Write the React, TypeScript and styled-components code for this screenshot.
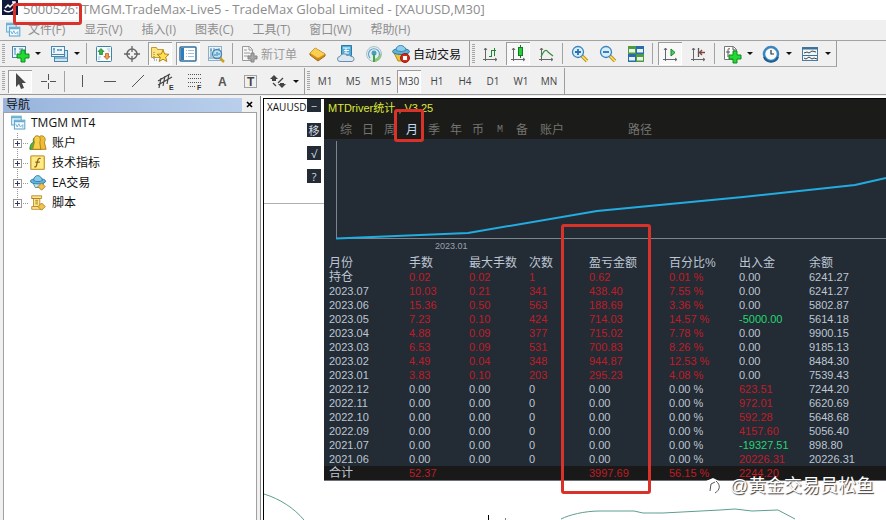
import React from 'react';
import styled, { createGlobalStyle, css } from 'styled-components';

const uiFont = '"Open Sans", "Noto Sans CJK SC", sans-serif';
const dataFont = '"Liberation Sans", "Noto Sans CJK SC", sans-serif';

const GlobalStyle = createGlobalStyle`
  *, *::before, *::after { box-sizing: border-box; }
  body { margin: 0; background: #fff; font-family: ${uiFont}; font-size: 12px; color: #111; }
  button { font: inherit; color: inherit; background: none; border: 0; padding: 0; margin: 0; }
  svg { display: block; flex: none; }
`;

const Page = styled.div`
  position: relative;
  display: flex;
  flex-direction: column;
  height: 100vh;
  min-height: 500px;
  overflow: hidden;
  background: #f0f0f0;
`;

const TitleBar = styled.header`
  display: flex;
  align-items: center;
  gap: 5px;
  height: 20px;
  flex: none;
  background: #fff;
  color: #8c8c8c;
  font-size: 13px;
  line-height: 16px;
  white-space: nowrap;
`;

const AppLogo = styled.svg`
  align-self: flex-start;
  margin-left: 2px;
`;

const AppTitle = styled.h1`
  margin: 0;
  padding-bottom: 2px;
  font: inherit;
  line-height: 16px;
`;

const MenuBar = styled.nav`
  display: flex;
  align-items: center;
  gap: 19px;
  height: 20px;
  flex: none;
  padding-left: 5px;
  color: #8e8e8e;
  line-height: 18px;
`;

const MenuIcon = styled.span`
  margin-right: -12px;
`;

const MenuItem = styled.button`
  white-space: nowrap;
`;

const ToolbarRow = styled.div<{ $last?: boolean }>`
  display: flex;
  flex: none;
  height: 27px;
  border-top: 1px solid ${p => (p.$last ? 'transparent' : '#a3a3a3')};
`;

const ToolGroup = styled.div<{ $lined?: boolean }>`
  display: flex;
  align-items: center;
  gap: 4px;
  padding: 0 3px 0 2px;
  border-right: 1px solid #9d9d9d;
  border-bottom: ${p => (p.$lined ? '1px solid #a8a8a8' : '0')};
`;

const Grip = styled.span`
  width: 3px;
  height: 20px;
  margin-right: -1px;
  background: repeating-linear-gradient(#a5a5a5 0 1px, #f0f0f0 1px 2px);
`;

const Separator = styled.span`
  width: 1px;
  height: 21px;
  margin-right: 1px;
  background: #a2a2a2;
`;

const ToolButton = styled.button<{ $pressed?: boolean }>`
  display: flex;
  align-items: center;
  justify-content: center;
  width: 24px;
  height: 23px;
  font-size: 10px;
  color: #444;
  white-space: nowrap;
  ${p =>
    p.$pressed &&
    css`
      background: #f8f8f8;
      box-shadow: inset 1px 1px 0 #9c9c9c, inset -1px -1px 0 #fff;
    `}
`;

const LabelButton = styled.button<{ $muted?: boolean }>`
  display: flex;
  align-items: center;
  gap: 2px;
  width: ${p => (p.$muted ? '64px' : '76px')};
  height: 23px;
  padding-left: 1px;
  color: ${p => (p.$muted ? '#999' : '#111')};
  white-space: nowrap;
`;

const DropArrow = styled.button`
  width: 11px;
  height: 23px;
  margin-left: -4px;
  display: flex;
  align-items: center;
  justify-content: center;
  &::after {
    content: '';
    border: 3px solid transparent;
    border-top-color: #111;
    border-bottom: 0;
  }
`;

const Workspace = styled.main`
  display: grid;
  grid-template-columns: 260px minmax(0, 1fr);
  flex: 1;
  min-height: 0;
  border-top: 1px solid #999;
`;

const Navigator = styled.aside`
  display: flex;
  flex-direction: column;
  padding: 2px 3px 0 3px;
`;

const NavHeading = styled.div`
  display: flex;
  align-items: center;
  height: 15px;
  flex: none;
`;

const NavTitle = styled.h2`
  flex: 1;
  margin: 0;
  padding-left: 3px;
  font: inherit;
  line-height: 14px;
  background: linear-gradient(90deg, #98b4dc, #b9cfec);
`;

const CloseButton = styled.button`
  width: 15px;
  height: 14px;
  display: flex;
  align-items: center;
  justify-content: center;
`;

const Tree = styled.ul`
  flex: 1;
  list-style: none;
  margin: 0;
  padding: 0 0 0 6px;
  background: #fff;
  border: 1px solid #a0a0a0;
  border-bottom: 0;
`;

const TreeRow = styled.li`
  display: flex;
  align-items: center;
  gap: 5px;
  height: 20px;
  line-height: 20px;
  white-space: nowrap;
`;

const ChartWindow = styled.section`
  position: relative;
  display: flex;
  align-items: flex-start;
  margin-top: 1px;
  border-left: 1px solid #858585;
  background: #fff;
  overflow: hidden;
`;

const ChartFrame = styled.div`
  display: flex;
  align-items: flex-start;
  flex: 1;
  height: 100%;
  margin-left: 2px;
  margin-top: 2px;
  border-left: 1px solid #000;
  border-top: 1px solid #000;
  min-width: 0;
`;

const SideRail = styled.div`
  display: flex;
  flex: none;
  justify-content: space-between;
  width: 60px;
  height: 105px;
  padding: 0 3px 0 3px;
  border-bottom: 1px solid #b0b0b0;
`;

const SymbolLabel = styled.span`
  width: 40px;
  overflow: hidden;
  font-size: 10px;
  line-height: 16px;
`;

const RailButtons = styled.div`
  display: flex;
  flex-direction: column;
  gap: 9px;
`;

const RailButton = styled.button`
  width: 14px;
  height: 14px;
  background: #232b35;
  color: #d5dde4;
  font-size: 11px;
  line-height: 13px;
  text-align: center;
  overflow: hidden;
  &:first-child { height: 13px; line-height: 10px; margin-bottom: 2px; }
`;

const Panel = styled.article`
  flex: 1;
  min-width: 0;
  background: #232b35;
  border-bottom: 1px solid #6b7177;
  font-family: ${dataFont};
  font-size: 11px;
`;

const PanelHeader = styled.div`
  height: 40px;
  background: #1b1b1a;
`;

const PanelTitle = styled.h2`
  margin: 0;
  padding-left: 4px;
  font-size: 11px;
  font-weight: 400;
  line-height: 19px;
  color: #dfe83c;
  white-space: pre;
`;

const Tabs = styled.div`
  display: flex;
  padding-left: 11px;
`;

const Tab = styled.button<{ $active?: boolean; $wide?: boolean; $apart?: boolean }>`
  width: ${p => (p.$wide ? '38px' : '22px')};
  margin-left: ${p => (p.$apart ? '50px' : '0')};
  font-size: 12px;
  line-height: 24px;
  text-align: center;
  color: ${p => (p.$active ? '#c5dcf4' : '#74746f')};
`;

const MonoTab = styled(Tab)`
  font-family: "Liberation Mono", monospace;
  font-size: 10px;
`;

const PlotArea = styled.div`
  height: 117px;
`;

const Plot = styled.svg`
  width: 100%;
  height: 101px;
`;

const PlotLabel = styled.div`
  padding-left: 111px;
  font-size: 9px;
  line-height: 12px;
  color: #9aa1a8;
`;

const Stats = styled.table`
  width: 100%;
  table-layout: fixed;
  border-collapse: collapse;
  color: #bdc6d2;
`;

const Column = styled.col<{ $width?: number }>`
  width: ${p => (p.$width ? `${p.$width}px` : 'auto')};
`;

const HeadCell = styled.th`
  height: 14px;
  padding: 0 0 0 5px;
  font-size: 12px;
  font-weight: 400;
  line-height: 14px;
  text-align: left;
  white-space: nowrap;
`;

const tones = { plain: '#bdc6d2', red: '#c01c25', green: '#22d872' };

const Cell = styled.td<{ $tone?: keyof typeof tones; $cjk?: boolean }>`
  height: 14px;
  padding: 0 0 0 5px;
  font-size: ${p => (p.$cjk ? '12px' : '11px')};
  line-height: 14px;
  white-space: nowrap;
  color: ${p => tones[p.$tone ?? 'plain']};
`;

const TotalRow = styled.tr`
  background: #191919;
`;

const PriceLines = styled.svg`
  position: absolute;
  left: 3px;
  top: 386px;
`;

const Highlight = styled.div<{ $x: number; $y: number; $w: number; $h: number }>`
  position: absolute;
  left: ${p => p.$x}px;
  top: ${p => p.$y}px;
  width: ${p => p.$w}px;
  height: ${p => p.$h}px;
  border: 3px solid #d8322b;
  border-radius: 3px;
  pointer-events: none;
`;

const Watermark = styled.div`
  position: absolute;
  right: 12px;
  bottom: 22px;
  display: flex;
  align-items: center;
  gap: 7px;
  color: #fff;
  font-size: 18px;
  line-height: 24px;
  font-family: ${dataFont};
  text-shadow: 1px 1px 1px #333;
`;

/* ---------- icons ---------- */

const Icon = ({ children, size = 20 }: { children: React.ReactNode; size?: number }) => (
  <svg width={size} height={size} viewBox="0 0 20 20" fill="none" aria-hidden="true">{children}</svg>
);

const GreenPlus = ({ x, y }: { x: number; y: number }) => (
  <path transform={`translate(${x} ${y})`} d="M4 0h4v4h4v4H8v4H4V8H0V4h4z" fill="#1fdb32" stroke="#128a20" />
);

const NewChartIcon = () => (
  <Icon>
    <rect x="2.5" y="2.5" width="13" height="11" fill="#eef6fc" stroke="#4787ad" />
    <path d="M5 4v7M4 5h2M9 5h4M9 8h4" stroke="#4787ad" />
    <GreenPlus x={7} y={6} />
  </Icon>
);

const WindowsIcon = () => (
  <Icon>
    <rect x="5.5" y="6.5" width="13" height="11" fill="#cfe5f4" stroke="#4787ad" />
    <path d="M6 14h12" stroke="#4787ad" />
    <rect x="2.5" y="2.5" width="13" height="10" fill="#edf6fc" stroke="#4787ad" />
    <path d="M3 10.5h12M5 4v5M4 5h2M8 6h5M9 5v2M12 5v2" stroke="#4787ad" />
  </Icon>
);

const MarketIcon = () => (
  <Icon>
    <rect x="2.5" y="2.5" width="15" height="15" rx="1" fill="#f6fbff" stroke="#3f83a9" />
    <path d="M7 4.5l3 3H8.500v3h-3v-3H4z" fill="#35b63c" stroke="#187a24" strokeWidth=".7" />
    <path d="M13 15.500l-3-3h1.500v-3h3v3H16z" fill="#f2a13b" stroke="#b34f21" strokeWidth=".7" />
    <path d="M13 5h3M14 7h2M4 13h3M4 15h2" stroke="#a8c4d8" />
  </Icon>
);

const CrosshairIcon = () => (
  <Icon>
    <circle cx="10" cy="10" r="5" stroke="#666" strokeWidth="1.500" />
    <path d="M10 2v6M10 12v6M2 10h6M12 10h6" stroke="#666" strokeWidth="1.300" />
  </Icon>
);

const StarFolderIcon = () => (
  <Icon>
    <path d="M1.500 3.500h5l1 2h6v8h-12z" fill="#fbe47e" stroke="#c29b2b" />
    <path d="M4 8v8h3" stroke="#777" strokeDasharray="1 1" />
    <path d="M13 6l1.700 4 4.300.3-3.300 2.800 1.100 4.400L13 15.200l-3.800 2.300 1.100-4.400L7 10.300l4.300-.3z" fill="#ffe051" stroke="#b5861b" />
  </Icon>
);

const NavigatorIcon = () => (
  <Icon>
    <rect x="2" y="3" width="16" height="14" rx="1" fill="#fff" stroke="#2f6f9e" strokeWidth="1.500" />
    <rect x="3" y="4" width="3" height="12" fill="#2f7cb8" />
    <path d="M8 6.500h1M10 6.500h6M8 9.500h1M10 9.500h6M8 12.500h1M10 12.500h6" stroke="#a7bfd3" />
  </Icon>
);

const TesterIcon = () => (
  <Icon>
    <rect x="2.500" y="2.500" width="13" height="14" fill="#e9f3fa" stroke="#8cb0c8" />
    <path d="M5 4v9M8 4v8M4 6h2M13 4v3M3 14h11" stroke="#5e90b1" />
    <path d="M14 14l4 4" stroke="#cf9d20" strokeWidth="2.500" />
    <circle cx="11" cy="10" r="4.500" fill="#b8dcf5" fillOpacity=".8" stroke="#4787ad" strokeWidth="1.300" />
    <path d="M9 10v2M11 8v4M13 9v2" stroke="#397aa5" />
  </Icon>
);

const OrderIcon = () => (
  <Icon>
    <path d="M3.500 2.500h7l3 3v11h-10z" fill="#f7f7f7" stroke="#999" />
    <path d="M10 3v3h3M5 6h3M5 9h6M5 12h5" stroke="#999" />
    <path d="M12 9h3v3h3v3h-3v3h-3v-3H9v-3h3z" fill="#a5a5a5" stroke="#858585" />
  </Icon>
);

const GoldIcon = () => (
  <Icon>
    <path d="M7 4l10 6v2l-7 5-8-6V9z" fill="#d58e1c" stroke="#a86a12" />
    <path d="M7 4l10 6-7 4-8-5z" fill="#f8cf52" />
    <path d="M10 14v3" stroke="#b87418" />
  </Icon>
);

const CommunityIcon = () => (
  <Icon>
    <path d="M5.500 1.500h10v10h-10z" fill="#53abd8" stroke="#287aa9" />
    <path d="M7 4h7M10 4v5M8 9h5M8 6.500h5" stroke="#fff" />
    <path d="M4 17.500a2.500 2.500 0 0 1 0-5 4 4 0 0 1 7-1 3 3 0 0 1 4 1 2.500 2.500 0 0 1 1 5z" fill="#dbe8f2" stroke="#6d8daa" />
  </Icon>
);

const SignalIcon = () => (
  <Icon>
    <circle cx="10" cy="10" r="7.500" fill="#e0eef2" stroke="#a9c1cc" />
    <path d="M6 14a5.500 5.500 0 1 1 8 0" stroke="#6aa3c2" strokeWidth="1.200" />
    <path d="M10 18c6-1 8-5 7-10-1 4-3 6-7 7z" fill="#8cc878" />
    <circle cx="10" cy="9" r="2.500" fill="#4d9ac5" />
    <path d="M10 10v8" stroke="#48a348" strokeWidth="2" />
  </Icon>
);

const AutoTradeIcon = () => (
  <Icon>
    <path d="M3 9l4 8h7l3-8z" fill="#efc43c" stroke="#b78b1c" />
    <ellipse cx="10" cy="7.500" rx="8.500" ry="3" fill="#5eb2dc" stroke="#287ba5" />
    <path d="M5 6c0-6 9-6 10 0-2 2-8 2-10 0z" fill="#8ed0eb" stroke="#3a8ab0" />
    <circle cx="14" cy="14" r="4.500" fill="#cf2b18" stroke="#9d1b0c" />
    <rect x="12" y="12" width="4" height="4" fill="#fff" />
  </Icon>
);

const Axes = () => <path d="M5.500 4v13M3 15.500h14M4 6l1.500-2L7 6M15 14l2 1.500-2 1.500" stroke="#666" />;

const BarsIcon = () => (
  <Icon><Axes /><path d="M11.500 6v7M9 12.500h2M12 6.500h4M14.500 4v8" stroke="#208431" /></Icon>
);
const CandlesIcon = () => (
  <Icon><Axes /><path d="M12.500 1v13" stroke="#117e22" /><rect x="10.500" y="3.500" width="4" height="8" fill="#29ce3c" stroke="#117e22" /></Icon>
);
const LineIcon = () => (
  <Icon><Axes /><path d="M5 13c3-7 5-8 7-5l5 4" stroke="#369044" strokeWidth="1.200" /></Icon>
);

const ZoomIcon = ({ plus }: { plus?: boolean }) => (
  <Icon>
    <path d="M12 12l5 5" stroke="#bf8f18" strokeWidth="3.500" />
    <path d="M12 12l5 5" stroke="#ffe36c" strokeWidth="1.500" />
    <circle cx="8" cy="8" r="5.500" fill="#d8effb" stroke="#3983bd" strokeWidth="1.300" />
    <path d={plus ? 'M5 8h6M8 5v6' : 'M5 8h6'} stroke="#2873b5" strokeWidth="1.800" />
  </Icon>
);

const TileIcon = () => (
  <Icon>
    {[[2, 2, '#4d9d3e'], [10, 2, '#286cad'], [2, 10, '#286cad'], [10, 10, '#4d9d3e']].map(([x, y, c]) => (
      <g key={`${x}${y}`}>
        <rect x={x} y={y} width="8" height="8" fill={String(c)} />
        <rect x={Number(x) + 1} y={Number(y) + 3} width="6" height="3.500" fill="#e7f4ed" />
      </g>
    ))}
  </Icon>
);

const ScrollIcon = () => (
  <Icon><Axes /><path d="M11 5v7l4-3.500z" fill="#4ed05c" stroke="#198229" /></Icon>
);
const ShiftIcon = () => (
  <Icon><Axes /><path d="M10.500 4v9" stroke="#555" strokeWidth="1.300" /><path d="M17 8.500h-5M14 6l-2.500 2.500L14 11" stroke="#82453c" strokeWidth="1.300" /></Icon>
);
const IndicatorsIcon = () => (
  <Icon>
    <path d="M2.500 2.500h9l3 3v10h-12z" fill="#fff" stroke="#777" />
    <path d="M8 5c-2-1-2 0-2 2v6M4 8h4M11 3v3h3" stroke="#555" />
    <GreenPlus x={7} y={7} />
  </Icon>
);
const ClockIcon = () => (
  <Icon>
    <circle cx="10" cy="10" r="7" fill="#f5fafd" stroke="#3d86bd" strokeWidth="2.500" />
    <path d="M3 13a7.500 7.500 0 0 0 14 0" stroke="#1d5a90" strokeWidth="2" />
    <path d="M10 6v4h3" stroke="#333" strokeWidth="1.200" />
  </Icon>
);
const TemplateIcon = () => (
  <Icon>
    <rect x="2.500" y="3.500" width="15" height="13" fill="#eff7fc" stroke="#487b9e" />
    <path d="M2 4.500h16" stroke="#3d7195" strokeWidth="2" />
    <path d="M3 11.500h14" stroke="#3d7195" />
    <path d="M4 9l3-1 2 1 3-2 4 1M4 14l2 1 3-2 3 2 2-1 3 1" stroke="#444" />
  </Icon>
);

const CursorIcon = () => <Icon><path d="M6 2v14l3-3 2 5 3-1-2-5h4z" fill="#484848" /></Icon>;
const CrossIcon = () => <Icon><path d="M10.500 3v6M10.500 12v6M3 10.500h6M12 10.500h6" stroke="#555" /></Icon>;
const VerticalIcon = () => <Icon><path d="M10.500 4v12" stroke="#555" /></Icon>;
const HorizontalIcon = () => <Icon><path d="M4 10.500h12" stroke="#555" /></Icon>;
const TrendIcon = () => <Icon><path d="M4 16L16 4" stroke="#555" /></Icon>;
const Letter = styled.text`
  font: 700 7px "Liberation Sans", sans-serif;
  fill: #333;
`;
const ChannelIcon = () => (
  <Icon>
    <path d="M2 10L14 3M2 14L16 6M5 7L3 17M9 5L7 15M13 3l-2 10" stroke="#444" strokeWidth="1.200" />
    <Letter x="13" y="19">E</Letter>
  </Icon>
);
const FiboIcon = () => (
  <Icon>
    <path d="M4 3.500h13M4 7.500h13M4 11.500h13M4 15.500h8" stroke="#555" strokeDasharray="1 1" />
    <Letter x="13" y="19">F</Letter>
  </Icon>
);
const TextIcon = () => <Icon><text x="6" y="15" fontFamily="Liberation Sans" fontWeight="700" fontSize="12" fill="#555">A</text></Icon>;
const LabelIcon = () => (
  <Icon>
    <rect x="4.500" y="4.500" width="12" height="12" stroke="#555" strokeDasharray="1 1" />
    <text x="7" y="15" fontFamily="Liberation Sans" fontWeight="700" fontSize="12" fill="#444">T</text>
  </Icon>
);
const ArrowsIcon = () => (
  <Icon>
    <path d="M6 4l4 4H8v2H4V8H2zM14 17l-4-4h2v-1h4v1h2z" fill="#444" />
    <path d="M5 12l3 3M10 12l5-5" stroke="#444" strokeWidth="1.300" />
  </Icon>
);

const TerminalIcon = () => (
  <Icon size={16}>
    <rect x="2" y="1.500" width="12" height="11" fill="#e5f4fc" stroke="#68aed0" strokeWidth="1.300" />
    <rect x="5.500" y="6.500" width="13" height="11" fill="#f5fbff" stroke="#5aa4c9" strokeWidth="1.300" />
    <path d="M2 3h12M5 8h13" stroke="#68aed0" strokeWidth="2" />
    <path d="M7 11l2 4 2-4 2 4 3-3v4" stroke="#5aa4c9" />
  </Icon>
);
const AccountsIcon = () => (
  <Icon size={18}>
    <path d="M1 17c0-5 2-7 4-8-2-7 7-7 6 0l3 8z" fill="#55b53c" stroke="#2f8127" />
    <path d="M10 17l1-8c-1-2-1-7 3-7s5 5 3 7l2 8z" fill="#f0bd38" stroke="#ad7b16" />
    <path d="M4 17l2-8c-1-2-1-7 3-7s4 5 3 7l1 8z" fill="#f6cf4c" stroke="#ad7b16" />
  </Icon>
);
const FunctionIcon = () => (
  <Icon size={18}>
    <rect x="2" y="2" width="15" height="15" rx="1" fill="#ffeb86" stroke="#caa13a" strokeWidth="1.500" />
    <path d="M13 5c-3-1-3 1-4 5s-1 5-3 4M7 9h5" stroke="#8b6219" strokeWidth="1.400" />
  </Icon>
);
const ExpertIcon = () => (
  <Icon size={18}>
    <path d="M4 9l3 6h7l3-6z" fill="#cde4df" stroke="#448ba6" />
    <ellipse cx="10" cy="8" rx="8.500" ry="3" fill="#65b5de" stroke="#2d7ca9" />
    <path d="M5 7c1-7 8-7 10 0-2 2-8 2-10 0z" fill="#87cbed" stroke="#2d7ca9" />
    <path d="M14 10l4 4-4 4-4-4z" fill="#f0c44c" stroke="#a87c22" />
  </Icon>
);
const ScriptIcon = () => (
  <Icon size={18}>
    <path d="M3 2h11v3h-2v9h2v3H3v-3h2V5H3z" fill="#ffe78a" stroke="#b68b2e" />
    <path d="M7 7h3M7 9h3M7 11h3M3 5h9M5 14h7" stroke="#a2792a" />
    <path d="M14 10l4 4-4 4-4-4z" fill="#f0c44c" stroke="#a87c22" />
  </Icon>
);
const Expander = ({ last }: { last?: boolean }) => (
  <svg width="18" height="20" viewBox="0 0 18 20" fill="none" aria-hidden="true">
    <path d={last ? 'M6.500 0v10M12 10.500h6' : 'M6.500 0v20M12 10.500h6'} stroke="#999" strokeDasharray="1 1" />
    <rect x="2.500" y="6.500" width="8" height="8" fill="#fff" stroke="#999" />
    <path d="M4 10.500h5M6.500 8v5" stroke="#333a66" />
  </svg>
);

const ExpandButton = styled.button`
  margin-left: 1px;
  margin-right: -5px;
`;

/* ---------- data ---------- */

const menus = ['文件(F)', '显示(V)', '插入(I)', '图表(C)', '工具(T)', '窗口(W)', '帮助(H)'];
const drawTools: [string, () => React.ReactElement][] = [
  ['垂直线', VerticalIcon], ['水平线', HorizontalIcon], ['趋势线', TrendIcon], ['通道', ChannelIcon],
  ['斐波那契', FiboIcon], ['文本', TextIcon], ['标签', LabelIcon], ['箭头', ArrowsIcon],
];
const periods = ['M1', 'M5', 'M15', 'M30', 'H1', 'H4', 'D1', 'W1', 'MN'];
const treeItems: [string, () => React.ReactElement][] = [
  ['账户', AccountsIcon], ['技术指标', FunctionIcon], ['EA交易', ExpertIcon], ['脚本', ScriptIcon],
];
const columns: [string, number?][] = [
  ['月份', 80], ['手数', 60], ['最大手数', 60], ['次数', 60], ['盈亏金额', 80], ['百分比%', 70], ['出入金', 70], ['余额'],
];
const rows = [
  ['持仓', '0.02', '0.02', '1', '0.62', '0.01 %', '0.00', '6241.27'],
  ['2023.07', '10.03', '0.21', '341', '438.40', '7.55 %', '0.00', '6241.27'],
  ['2023.06', '15.36', '0.50', '563', '188.69', '3.36 %', '0.00', '5802.87'],
  ['2023.05', '7.23', '0.10', '424', '714.03', '14.57 %', '-5000.00', '5614.18'],
  ['2023.04', '4.88', '0.09', '377', '715.02', '7.78 %', '0.00', '9900.15'],
  ['2023.03', '6.53', '0.09', '531', '700.83', '8.26 %', '0.00', '9185.13'],
  ['2023.02', '4.49', '0.04', '348', '944.87', '12.53 %', '0.00', '8484.30'],
  ['2023.01', '3.83', '0.10', '203', '295.23', '4.08 %', '0.00', '7539.43'],
  ['2022.12', '0.00', '0.00', '0', '0.00', '0.00 %', '623.51', '7244.20'],
  ['2022.11', '0.00', '0.00', '0', '0.00', '0.00 %', '972.01', '6620.69'],
  ['2022.10', '0.00', '0.00', '0', '0.00', '0.00 %', '592.28', '5648.68'],
  ['2022.09', '0.00', '0.00', '0', '0.00', '0.00 %', '4157.60', '5056.40'],
  ['2021.07', '0.00', '0.00', '0', '0.00', '0.00 %', '-19327.51', '898.80'],
  ['2021.06', '0.00', '0.00', '0', '0.00', '0.00 %', '20226.31', '20226.31'],
];
const totals = ['合计', '52.37', '', '', '3997.69', '56.15 %', '2244.20', ''];

const toneOf = (value: string, column: number): keyof typeof tones => {
  const n = parseFloat(value);
  if (column === 0 || column === 7 || !n) return 'plain';
  return n < 0 ? 'green' : 'red';
};

const StatCells = ({ values }: { values: string[] }) => (
  <>
    {values.map((v, i) => (
      <Cell key={i} $tone={toneOf(v, i)} $cjk={i === 0 && !/\d/.test(v)}>{v}</Cell>
    ))}
  </>
);

const Tool = ({ label, pressed, children }: { label: string; pressed?: boolean; children: React.ReactNode }) => (
  <ToolButton aria-label={label} aria-pressed={pressed} $pressed={pressed}>{children}</ToolButton>
);

export default function App() {
  return (
    <Page>
      <GlobalStyle />
      <TitleBar>
        <AppLogo width="16" height="15" viewBox="0 0 16 15" fill="none" aria-hidden="true">
          <path d="M0 0h16v15H0z" fill="#10173c" />
          <path d="M2 10c3 3 8 2 10-2M3 8l3-3 2 2 5-5M10 2h3v3" stroke="#fff" strokeWidth="1.500" />
        </AppLogo>
        <AppTitle>5000526: TMGM.TradeMax-Live5 - TradeMax Global Limited - [XAUUSD,M30]</AppTitle>
      </TitleBar>

      <MenuBar>
        <MenuIcon><TerminalIcon /></MenuIcon>
        {menus.map(m => <MenuItem key={m}>{m}</MenuItem>)}
      </MenuBar>

      <ToolbarRow>
        <ToolGroup $lined>
          <Grip />
          <Tool label="新图表"><NewChartIcon /></Tool><DropArrow aria-label="新图表选项" />
          <Tool label="配置文件"><WindowsIcon /></Tool><DropArrow aria-label="配置文件选项" />
          <Separator />
          <Tool label="市场报价"><MarketIcon /></Tool>
          <Tool label="数据窗口"><CrosshairIcon /></Tool>
          <Tool label="收藏夹" pressed><StarFolderIcon /></Tool>
          <Tool label="导航" pressed><NavigatorIcon /></Tool>
          <Tool label="策略测试"><TesterIcon /></Tool>
          <Separator />
          <LabelButton $muted><OrderIcon />新订单</LabelButton>
          <Tool label="编辑器"><GoldIcon /></Tool>
          <Tool label="社区"><CommunityIcon /></Tool>
          <Tool label="信号"><SignalIcon /></Tool>
          <LabelButton><AutoTradeIcon />自动交易</LabelButton>
        </ToolGroup>
        <ToolGroup $lined>
          <Grip />
          <Tool label="柱状图"><BarsIcon /></Tool>
          <Tool label="蜡烛图" pressed><CandlesIcon /></Tool>
          <Tool label="折线图"><LineIcon /></Tool>
          <Separator />
          <Tool label="放大"><ZoomIcon plus /></Tool>
          <Tool label="缩小"><ZoomIcon /></Tool>
          <Tool label="平铺窗口"><TileIcon /></Tool>
          <Separator />
          <Tool label="自动滚动" pressed><ScrollIcon /></Tool>
          <Tool label="图表平移"><ShiftIcon /></Tool>
          <Separator />
          <Tool label="指标"><IndicatorsIcon /></Tool><DropArrow aria-label="指标选项" />
          <Tool label="周期"><ClockIcon /></Tool><DropArrow aria-label="周期选项" />
          <Tool label="模板"><TemplateIcon /></Tool><DropArrow aria-label="模板选项" />
        </ToolGroup>
      </ToolbarRow>

      <ToolbarRow $last>
        <ToolGroup>
          <Grip />
          <Tool label="光标" pressed><CursorIcon /></Tool>
          <Tool label="十字线"><CrossIcon /></Tool>
          <Separator />
          {drawTools.map(([label, Glyph]) => <Tool key={label} label={label}><Glyph /></Tool>)}
          <DropArrow aria-label="箭头选项" />
        </ToolGroup>
        <ToolGroup>
          <Grip />
          {periods.map(p => <ToolButton key={p} $pressed={p === 'M30'}>{p}</ToolButton>)}
        </ToolGroup>
      </ToolbarRow>

      <Workspace>
        <Navigator>
          <NavHeading>
            <NavTitle>导航</NavTitle>
            <CloseButton aria-label="关闭">
              <svg width="7" height="7" viewBox="0 0 7 7"><path d="M1 1l5 5M6 1L1 6" stroke="#000" strokeWidth="1.600" /></svg>
            </CloseButton>
          </NavHeading>
          <Tree>
            <TreeRow><TerminalIcon />TMGM MT4</TreeRow>
            {treeItems.map(([label, Glyph], i) => (
              <TreeRow key={label}>
                <ExpandButton aria-label={`展开 ${label}`}><Expander last={i === treeItems.length - 1} /></ExpandButton>
                <Glyph />
                {label}
              </TreeRow>
            ))}
          </Tree>
        </Navigator>

        <ChartWindow>
          <PriceLines width="640" height="60" viewBox="0 0 640 60" fill="none" aria-hidden="true">
            <path d="M0 12C16 17 30 26 40 38M297 37C305 33 320 29 336 29h34l9 2h20l57-3 15-1 17 2 26-1 17 9" stroke="#5f9d8f" />
            <path d="M224.500 33v5M241 37h1" stroke="#000" />
          </PriceLines>
          <ChartFrame>
            <SideRail>
              <SymbolLabel>XAUUSD</SymbolLabel>
              <RailButtons>
                <RailButton aria-label="最小化">−</RailButton>
                <RailButton>移</RailButton>
                <RailButton>√</RailButton>
                <RailButton>?</RailButton>
              </RailButtons>
            </SideRail>
            <Panel>
              <PanelHeader>
                <PanelTitle>MTDriver统计 , V3.25</PanelTitle>
                <Tabs>
                  {['综', '日', '周', '月', '季', '年', '币'].map(t => <Tab key={t} $active={t === '月'}>{t}</Tab>)}
                  <MonoTab>M</MonoTab>
                  <Tab>备</Tab>
                  <Tab $wide>账户</Tab>
                  <Tab $wide $apart>路径</Tab>
                </Tabs>
              </PanelHeader>
              <PlotArea>
                <Plot viewBox="0 0 562 101" preserveAspectRatio="none" fill="none" role="img" aria-label="余额曲线">
                  <path d="M12.500 2v98M12 99.500h550" stroke="#7c858c" vectorEffect="non-scaling-stroke" />
                  <path d="M12 99.500L144 94 273 72 419 58 531 46l31-7" stroke="#22ace0" strokeWidth="2" vectorEffect="non-scaling-stroke" />
                </Plot>
                <PlotLabel>2023.01</PlotLabel>
              </PlotArea>
              <Stats>
                <colgroup>{columns.map(([name, width]) => <Column key={name} $width={width} />)}</colgroup>
                <thead><tr>{columns.map(([name]) => <HeadCell key={name} scope="col">{name}</HeadCell>)}</tr></thead>
                <tbody>{rows.map(r => <tr key={r[0]}><StatCells values={r} /></tr>)}</tbody>
                <tfoot><TotalRow><StatCells values={totals} /></TotalRow></tfoot>
              </Stats>
            </Panel>
          </ChartFrame>
        </ChartWindow>
      </Workspace>

      <Highlight $x={13} $y={3} $w={69} $h={22} />
      <Highlight $x={394} $y={109} $w={30} $h={33} />
      <Highlight $x={561} $y={224} $w={90} $h={270} />
      <Watermark>
        <svg width="18" height="18" viewBox="0 0 18 18" aria-hidden="true">
          <path d="M1 4L8 1l8 4v7l-5 5-4-3-3 3-2-6z" fill="#fff" />
          <path d="M5 14l1-7 4-2M11 4c5 4 4 9-1 12" stroke="#555" fill="none" />
        </svg>
        @黄金交易员松鱼
      </Watermark>
    </Page>
  );
}
